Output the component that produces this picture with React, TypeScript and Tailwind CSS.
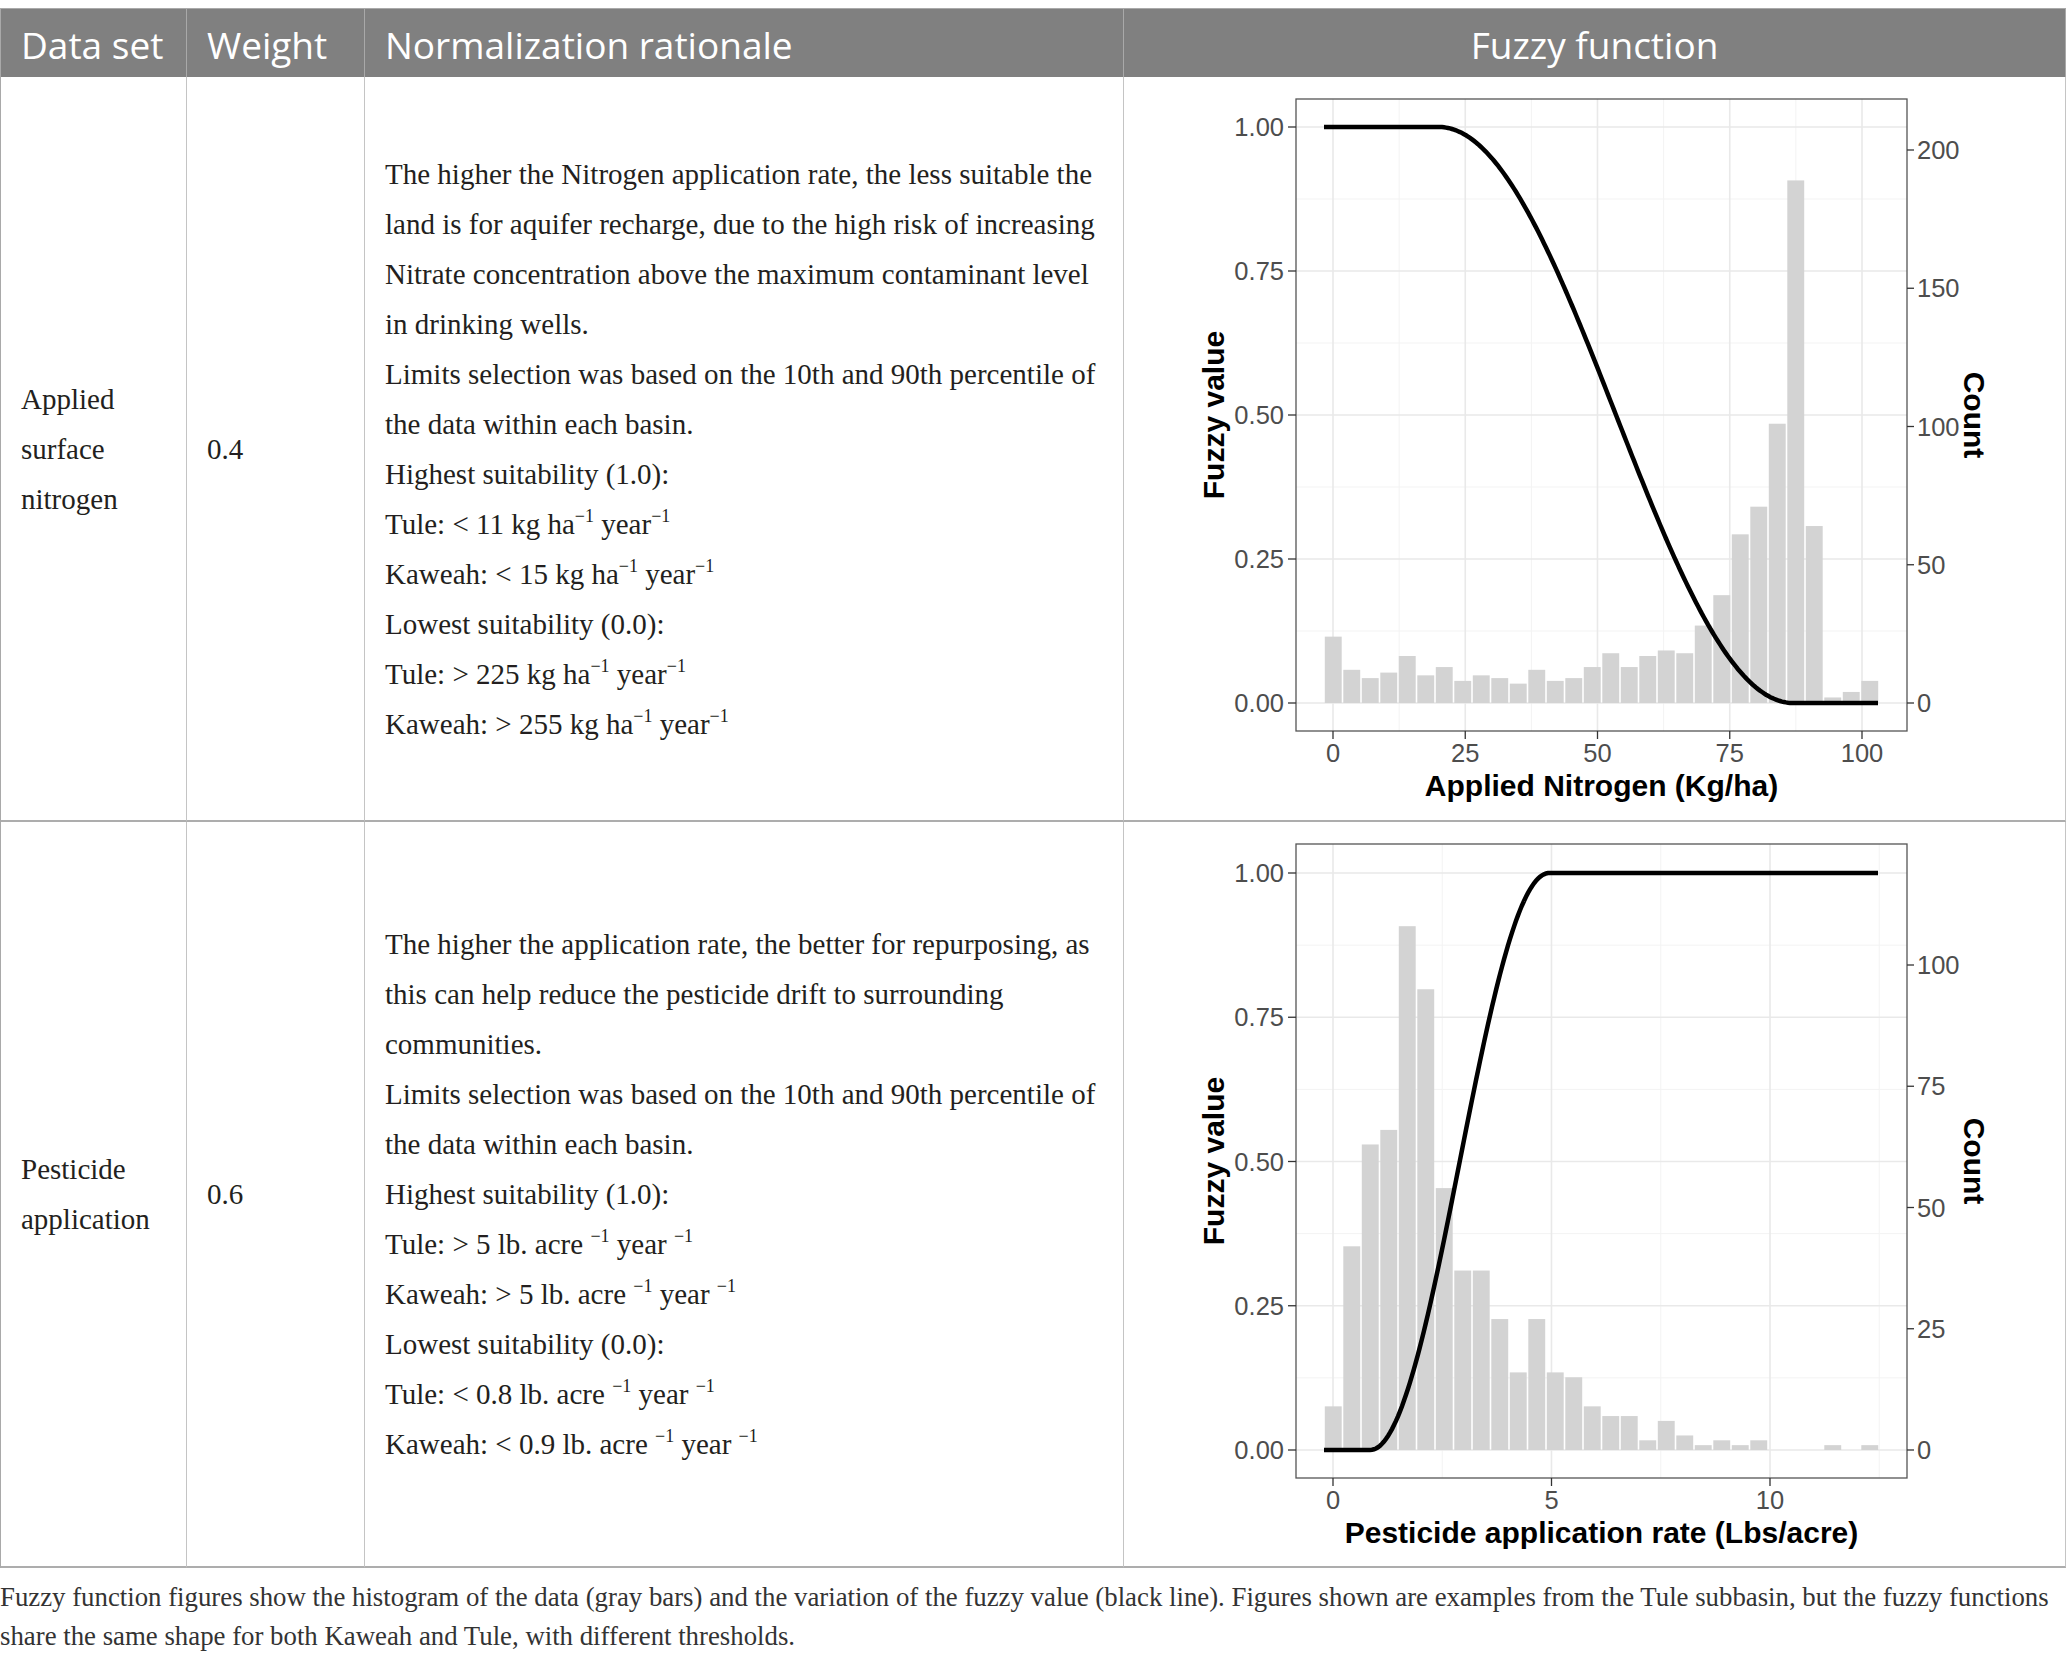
import type { ReactNode } from "react";

type ChartCfg = {
  vb: string;
  h: number;
  top: number;
  bottom: number;
  y0: number;
  y1: number;
  x0: number;
  ppu: number;
  cpx: number;
  xt: number[];
  xm: number[];
  ct: number[];
  counts: number[];
  f: (d: number) => number;
  title: string;
};

const LEFT = 1296;
const RIGHT = 1907;
const BAR0 = 1324;
const BARW = 18.5;

const ramp = (d: number, a: number, b: number) => {
  if (d <= a) return 0;
  if (d >= b) return 1;
  return 0.5 * (1 - Math.cos((Math.PI * (d - a)) / (b - a)));
};

const nitrogen: ChartCfg = {
  vb: "1124 77 941 743",
  h: 743,
  top: 99,
  bottom: 731,
  y0: 703,
  y1: 127,
  x0: 1333,
  ppu: 5.29,
  cpx: 2.765,
  xt: [0, 25, 50, 75, 100],
  xm: [12.5, 37.5, 62.5, 87.5],
  ct: [0, 50, 100, 150, 200],
  counts: [24, 12, 9, 11, 17, 10, 13, 8, 10, 9, 7, 12, 8, 9, 13, 18, 13, 17, 19, 18, 28, 39, 61, 71, 101, 189, 64, 2, 4, 8],
  f: (d) => 1 - ramp(d, 20, 87),
  title: "Applied Nitrogen (Kg/ha)",
};

const pesticide: ChartCfg = {
  vb: "1124 822 941 744",
  h: 744,
  top: 844,
  bottom: 1478,
  y0: 1450,
  y1: 873,
  x0: 1333,
  ppu: 43.7,
  cpx: 4.85,
  xt: [0, 5, 10],
  xm: [2.5, 7.5, 12.5],
  ct: [0, 25, 50, 75, 100],
  counts: [9, 42, 63, 66, 108, 95, 54, 37, 37, 27, 16, 27, 16, 15, 9, 7, 7, 2, 6, 3, 1, 2, 1, 2, 0, 0, 0, 1, 0, 1],
  f: (d) => ramp(d, 0.85, 4.95),
  title: "Pesticide application rate (Lbs/acre)",
};

function FuzzyChart({ c }: { c: ChartCfg }) {
  const Y = (v: number) => c.y0 - v * (c.y0 - c.y1);
  const X = (d: number) => c.x0 + d * c.ppu;
  const C = (n: number) => c.y0 - n * c.cpx;
  const mid = (c.top + c.bottom) / 2;
  const font = "Liberation Sans, Arial, sans-serif";

  const pts: string[] = [];
  for (let px = BAR0; px <= BAR0 + BARW * 30; px += 2) {
    pts.push(`${px},${Y(c.f((px - c.x0) / c.ppu)).toFixed(1)}`);
  }

  return (
    <svg width={941} height={c.h} viewBox={c.vb} className="block shrink-0">
      <rect x={LEFT} y={c.top} width={RIGHT - LEFT} height={c.bottom - c.top} fill="#fff" />
      {[0.125, 0.375, 0.625, 0.875].map((v) => (
        <line key={v} x1={LEFT} x2={RIGHT} y1={Y(v)} y2={Y(v)} stroke="#f3f3f3" strokeWidth={1} />
      ))}
      {c.xm.map((d) => (
        <line key={d} x1={X(d)} x2={X(d)} y1={c.top} y2={c.bottom} stroke="#f3f3f3" strokeWidth={1} />
      ))}
      {[0, 0.25, 0.5, 0.75, 1].map((v) => (
        <line key={v} x1={LEFT} x2={RIGHT} y1={Y(v)} y2={Y(v)} stroke="#e9e9e9" strokeWidth={1.6} />
      ))}
      {c.xt.map((d) => (
        <line key={d} x1={X(d)} x2={X(d)} y1={c.top} y2={c.bottom} stroke="#e9e9e9" strokeWidth={1.6} />
      ))}
      {c.counts.map((n, i) =>
        n > 0 ? (
          <rect key={i} x={BAR0 + i * BARW + 0.8} y={C(n)} width={BARW - 1.6} height={c.y0 - C(n)} fill="#d3d3d3" />
        ) : null
      )}
      <path d={"M" + pts.join(" L")} fill="none" stroke="#000" strokeWidth={4.5} />
      <rect x={LEFT} y={c.top} width={RIGHT - LEFT} height={c.bottom - c.top} fill="none" stroke="#555" strokeWidth={1.3} />

      {[0, 0.25, 0.5, 0.75, 1].map((v) => (
        <g key={v}>
          <line x1={LEFT - 8} x2={LEFT} y1={Y(v)} y2={Y(v)} stroke="#333" strokeWidth={1.3} />
          <text x={1284} y={Y(v)} textAnchor="end" dominantBaseline="central" fontFamily={font} fontSize={25.5} fill="#4d4d4d">
            {v.toFixed(2)}
          </text>
        </g>
      ))}
      {c.ct.map((n) => (
        <g key={n}>
          <line x1={RIGHT} x2={RIGHT + 7} y1={C(n)} y2={C(n)} stroke="#333" strokeWidth={1.3} />
          <text x={1917} y={C(n)} dominantBaseline="central" fontFamily={font} fontSize={25.5} fill="#4d4d4d">
            {n}
          </text>
        </g>
      ))}
      {c.xt.map((d) => (
        <g key={d}>
          <line x1={X(d)} x2={X(d)} y1={c.bottom} y2={c.bottom + 8} stroke="#333" strokeWidth={1.3} />
          <text x={X(d)} y={c.bottom + 22} textAnchor="middle" dominantBaseline="central" fontFamily={font} fontSize={25.5} fill="#4d4d4d">
            {d}
          </text>
        </g>
      ))}
      <text x={(LEFT + RIGHT) / 2} y={c.bottom + 54} textAnchor="middle" dominantBaseline="central" fontFamily={font} fontSize={30} fontWeight={700} fill="#000">
        {c.title}
      </text>
      <text x={1213} y={mid} transform={`rotate(-90 1213 ${mid})`} textAnchor="middle" dominantBaseline="central" fontFamily={font} fontSize={30} fontWeight={700} fill="#000">
        Fuzzy value
      </text>
      <text x={1974} y={mid} transform={`rotate(90 1974 ${mid})`} textAnchor="middle" dominantBaseline="central" fontFamily={font} fontSize={30} fontWeight={700} fill="#000">
        Count
      </text>
    </svg>
  );
}

const sup = (s: string) => <sup className="text-[18px] top-[-0.65em]">{s}</sup>;

const nitroText: ReactNode[] = [
  "The higher the Nitrogen application rate, the less suitable the",
  "land is for aquifer recharge, due to the high risk of increasing",
  "Nitrate concentration above the maximum contaminant level",
  "in drinking wells.",
  "Limits selection was based on the 10th and 90th percentile of",
  "the data within each basin.",
  "Highest suitability (1.0):",
  <>Tule: {"<"} 11 kg ha{sup("−1")} year{sup("−1")}</>,
  <>Kaweah: {"<"} 15 kg ha{sup("−1")} year{sup("−1")}</>,
  "Lowest suitability (0.0):",
  <>Tule: {">"} 225 kg ha{sup("−1")} year{sup("−1")}</>,
  <>Kaweah: {">"} 255 kg ha{sup("−1")} year{sup("−1")}</>,
];

const pestText: ReactNode[] = [
  "The higher the application rate, the better for repurposing, as",
  "this can help reduce the pesticide drift to surrounding",
  "communities.",
  "Limits selection was based on the 10th and 90th percentile of",
  "the data within each basin.",
  "Highest suitability (1.0):",
  <>Tule: {">"} 5 lb. acre {sup("−1")} year {sup("−1")}</>,
  <>Kaweah: {">"} 5 lb. acre {sup("−1")} year {sup("−1")}</>,
  "Lowest suitability (0.0):",
  <>Tule: {"<"} 0.8 lb. acre {sup("−1")} year {sup("−1")}</>,
  <>Kaweah: {"<"} 0.9 lb. acre {sup("−1")} year {sup("−1")}</>,
];

const rows = [
  { name: ["Applied", "surface", "nitrogen"], weight: "0.4", text: nitroText, chart: nitrogen, h: "h-[745px]" },
  { name: ["Pesticide", "application"], weight: "0.6", text: pestText, chart: pesticide, h: "h-[746px]" },
];

const head = "flex h-[68px] items-center whitespace-nowrap border-r border-[#a9a9a9] bg-[#808080] pt-1 font-['Open_Sans',sans-serif] text-[37px] text-white";
const cell = "flex items-center border-r border-b-2 border-r-[#c4c4c4] border-b-[#adadad]";

export default function App() {
  return (
    <div className="min-h-[1662px] w-[2067px] bg-white pt-2 font-['Liberation_Serif',serif] text-[29px] leading-[50px] text-[#231f20]">
      <div className="grid w-[2066px] grid-cols-[186px_178px_759px_942px] border-l border-t border-[#a9a9a9]">
        <div className={`${head} px-5`}>Data set</div>
        <div className={`${head} px-5`}>Weight</div>
        <div className={`${head} px-5`}>Normalization rationale</div>
        <div className={`${head} justify-center`}>Fuzzy function</div>

        {rows.map((r) => (
          <div key={r.weight} className="contents">
            <div className={`${cell} ${r.h} px-5`}>
              <div>
                {r.name.map((w) => (
                  <div key={w}>{w}</div>
                ))}
              </div>
            </div>
            <div className={`${cell} ${r.h} px-5`}>{r.weight}</div>
            <div className={`${cell} ${r.h} px-5`}>
              <div>
                {r.text.map((l, i) => (
                  <div key={i} className="whitespace-nowrap">
                    {l}
                  </div>
                ))}
              </div>
            </div>
            <div className={`${cell} ${r.h} overflow-hidden`}>
              <FuzzyChart c={r.chart} />
            </div>
          </div>
        ))}
      </div>
      <p className="mt-[10px] text-[26.8px] leading-[39px] text-[#333]">
        <span className="block whitespace-nowrap">
          Fuzzy function figures show the histogram of the data (gray bars) and the variation of the fuzzy value (black line). Figures shown are examples from the Tule subbasin, but the fuzzy functions
        </span>
        <span className="block whitespace-nowrap">share the same shape for both Kaweah and Tule, with different thresholds.</span>
      </p>
    </div>
  );
}
